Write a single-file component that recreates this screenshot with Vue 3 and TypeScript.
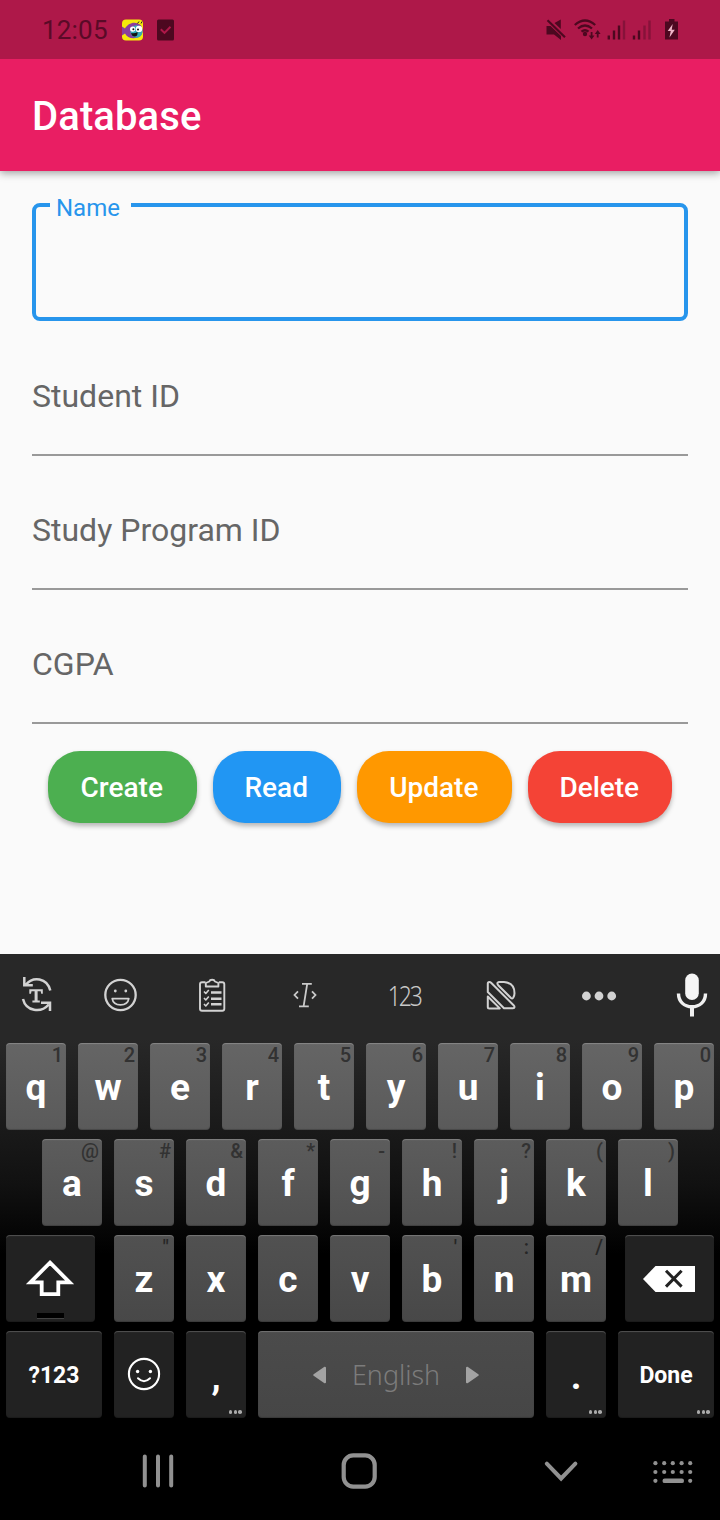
<script setup lang="ts">
interface Key {
  label: string
  hint?: string
}

const toKeys = (letters: string, hints: string[]): Key[] =>
  letters.split('').map((label, i) => ({ label, hint: hints[i] }))

const rowOne: Key[] = toKeys('qwertyuiop', '1234567890'.split(''))
const rowTwo: Key[] = toKeys('asdfghjkl', ['@', '#', '&', '*', '-', '!', '?', '(', ')'])
const rowThree: Key[] = toKeys('zxcvbnm', ['"', '', '', '', "'", ':', '/'])

const isNarrow = (hint?: string): boolean => !!hint && '-!:"\''.includes(hint)

const fields: string[] = ['Student ID', 'Study Program ID', 'CGPA']
const actions: { label: string; tone: string }[] = [
  { label: 'Create', tone: 'green' },
  { label: 'Read', tone: 'blue' },
  { label: 'Update', tone: 'orange' },
  { label: 'Delete', tone: 'red' },
]
const dotColumns: number[] = [655.4, 664.2, 672.8, 681.6, 690.2]
</script>

<template>
  <div class="screen">
    <div class="status">
      <span class="clock">12:05</span>
      <svg class="app-icon" width="22" height="22" viewBox="121 18.5 22 22">
        <rect x="122" y="19" width="21" height="21" rx="4" fill="#f5ea0a" />
        <path d="M122 26l3 2c3-6 11-8 16-3 3 4 2 10-3 12-6 2-11 0-13-4l-3 2z" fill="#8a3f9c" />
        <ellipse cx="136.5" cy="31" rx="6" ry="6.2" fill="#35a9b8" />
        <circle cx="132.7" cy="28.6" r="2.7" fill="#fff" />
        <circle cx="139" cy="28.4" r="3.2" fill="#fff" />
        <circle cx="133.4" cy="28.8" r="1" fill="#111" />
        <circle cx="138" cy="29" r="1" fill="#111" />
        <path d="M131 32.5q3.500 1 6.500-1q.5 4.500-3 4.500q-2.500 0-3.500-3.500z" fill="#111" />
        <path d="M137.500 23l1.500-2M141 23l1-2" stroke="#222" stroke-width="1" />
      </svg>
      <svg class="task-icon" width="18" height="22" viewBox="156 18.500 18 22">
        <rect x="157" y="19" width="17" height="21" rx="1.500" fill="#4d0820" />
        <path d="M160.800 28.700l3.700 3.700l6-6.200" fill="none" stroke="#ae1849" stroke-width="2" />
      </svg>
      <svg class="signals" width="140" height="26" viewBox="542 16.500 140 26">
        <g fill="#4d0820">
          <path d="M546.500 25.500h4l10.500 10v4l-7-5.500h-7.500zM554.500 22.500l6.300-3.500v9.500z" />
          <path d="M547.500 19.800l17.500 17" stroke="#4d0820" stroke-width="2.200" />
          <circle cx="585" cy="33.500" r="2.200" />
          <rect x="607.600" y="35" width="2.400" height="4" />
          <rect x="612.800" y="30" width="2.400" height="9" />
          <rect x="617.800" y="25" width="2.400" height="14" />
          <rect x="632.800" y="35" width="2.400" height="4" />
          <rect x="637.800" y="30" width="2.400" height="9" />
          <path d="M669 18.500h5.500v2.500h3.500v18h-13v-18h4z" />
          <path d="M590.700 31.500h1.800v3.500h2l-2.900 4l-2.900-4h2zM596.800 37h1.800v-3.500h2l-2.900-4l-2.900 4h2z" />
        </g>
        <g fill="#86123a">
          <rect x="622.800" y="20" width="2.400" height="19" />
          <rect x="643.300" y="25" width="2.400" height="14" />
          <rect x="648.300" y="20" width="2.400" height="19" />
        </g>
        <g fill="none" stroke="#4d0820" stroke-width="2.300">
          <path d="M574.800 24.500q10.200-9 20.400 0M578 28q7-6 14 0M581.500 31.200q3.500-3 7 0" />
        </g>
        <path d="M672.700 23.500l-5 7h3l-1.200 6.500l5.300-7.800h-3.100z" fill="#efb6c8" />
      </svg>
    </div>

    <header class="app-bar">Database</header>

    <main class="content">
      <div class="outlined">
        <label class="floating">Name</label>
      </div>
      <div class="fields">
        <div v-for="field in fields" :key="field" class="underlined">{{ field }}</div>
      </div>
      <div class="actions">
        <button v-for="a in actions" :key="a.label" :class="['action', a.tone]">{{ a.label }}</button>
      </div>
    </main>

    <section class="keyboard">
      <div class="tools">
        <svg width="40" height="48" viewBox="17 972 40 48">
          <g fill="none" stroke="#d2d2d2" stroke-width="2.500">
            <path d="M24.300 977v8.300h8.500M26 984.500C33 976 47 977.500 50.300 990.500" />
            <path d="M50 1011v-8.300h-9M23 999C26 1011.500 41 1013.500 48.700 1004.500" />
          </g>
          <path d="M29.300 989.200h13.500v4.500h-1.600l-.5-2.400h-3.100v9.200h2.200v1.900h-7.400v-1.900h2.200v-9.200h-3.100l-.5 2.400h-1.700z" fill="#d2d2d2" />
        </svg>
        <svg width="40" height="48" viewBox="101 972 40 48">
          <g fill="none" stroke="#d2d2d2">
            <circle cx="120.500" cy="995" r="15.200" stroke-width="2.300" />
            <path d="M112.200 998.600h16.600q-1 6.200-8.300 6.200t-8.300-6.200z" stroke-width="1.700" stroke-linejoin="round" />
          </g>
          <circle cx="115.300" cy="991" r="1.400" fill="#d2d2d2" />
          <circle cx="125.800" cy="991" r="1.400" fill="#d2d2d2" />
        </svg>
        <svg width="40" height="48" viewBox="192 972 40 48">
          <g fill="none" stroke="#d2d2d2" stroke-width="1.900" stroke-linejoin="round">
            <path d="M205.500 982.300h-3.500q-2 0-2 2v24.400q0 2 2 2h20.300q2 0 2-2v-24.400q0-2-2-2h-3.500" />
            <path d="M205.800 986.500v-3.500l3.500-1.500q.5-1.800 2.800-1.800t2.800 1.800l3.500 1.500v3.500z" />
            <path d="M204 991.500l1.800 2l3-3.500M204 998l1.800 2l3-3.500M204 1004l1.800 2l3-3.500" stroke-width="1.600" />
          </g>
          <path d="M211 992.500h10.500M211 998.800h10.500M211 1004.300h10.500" stroke="#d2d2d2" stroke-width="2.400" />
        </svg>
        <svg width="40" height="48" viewBox="285 972 40 48">
          <g fill="none" stroke="#cacaca" stroke-width="1.800">
            <path d="M302 983.800h9.800M299 1006.300h9.800M307.200 983.800l-3.600 22.500" />
            <path d="M298 991.300l-3.500 3.700l3.500 3.700M312 991.300l3.500 3.700l-3.500 3.700" />
          </g>
        </svg>
        <span class="numbers">123</span>
        <svg width="40" height="48" viewBox="481 972 40 48">
          <g fill="none" stroke="#d2d2d2" stroke-width="2" stroke-linejoin="round">
            <path d="M487.800 992v-8.500q0-1.500 1.500-1.500q1 0 1.800.8l22.500 22.500q1 1 .9 1.900q-.1 1-1.500 1h-9z" />
            <path d="M487.800 996.500l12 11.900h-10.500q-1.500 0-1.500-1.500z" />
            <path d="M499 982h5q10.500.8 10.500 11.200q0 2.500-1.300 4.600q-.9 1.300-2.200.2l-12.800-12.800q-2-2.600.8-3.200z" />
          </g>
        </svg>
        <svg width="40" height="48" viewBox="579 972 40 48" fill="#d2d2d2">
          <circle cx="586.400" cy="996" r="4.400" />
          <circle cx="599" cy="996" r="4.400" />
          <circle cx="611.700" cy="996" r="4.400" />
        </svg>
        <svg class="mic" width="40" height="48" viewBox="672 972 40 48">
          <rect x="685.200" y="973.500" width="13.600" height="26.500" rx="6.800" fill="#f5f5f5" />
          <path d="M678.500 993.500c0 8 5.500 13.300 13.500 13.300s13.500-5.300 13.500-13.300" fill="none" stroke="#f0f0f0" stroke-width="3.400" />
          <path d="M692 1006v10.500" stroke="#f0f0f0" stroke-width="4" />
        </svg>
      </div>

      <div class="rows">
        <div class="row one">
          <div v-for="k in rowOne" :key="k.label" class="key"><span class="hint">{{ k.hint }}</span>{{ k.label }}</div>
        </div>
        <div class="row two">
          <div v-for="k in rowTwo" :key="k.label" class="key"><span :class="['hint', { narrow: isNarrow(k.hint) }]">{{ k.hint }}</span>{{ k.label }}</div>
        </div>
        <div class="row three">
          <div class="key dark shift">
            <svg width="89" height="87" viewBox="6 1235 89 87">
              <path d="M50 1262.600l19.600 19.800h-11.300v11.800h-16.600v-11.800h-11.300z" fill="none" stroke="#fff" stroke-width="3.800" />
              <path d="M37 1313h27v5h-27z" fill="#000" />
              <path d="M37 1318.500h27" stroke="#444" stroke-width="1" />
            </svg>
          </div>
          <div class="letters">
            <div v-for="k in rowThree" :key="k.label" class="key"><span :class="['hint', { narrow: isNarrow(k.hint) }]">{{ k.hint }}</span>{{ k.label }}</div>
          </div>
          <div class="key dark">
            <svg width="89" height="87" viewBox="625 1235 89 87">
              <path d="M643 1279l12.500-13h39.500v26h-39.500z" fill="#fff" />
              <path d="M666 1270.800l15.600 15.800M681.600 1270.800l-15.600 15.800" stroke="#222" stroke-width="3" />
            </svg>
          </div>
        </div>
        <div class="row four">
          <div class="key dark word">?123</div>
          <div class="key dark">
            <svg width="60" height="87" viewBox="114 1331 60 87">
              <circle cx="144" cy="1374" r="15.100" fill="none" stroke="#fff" stroke-width="2.100" />
              <circle cx="137.600" cy="1371.500" r="1.700" fill="#fff" />
              <circle cx="150.400" cy="1371.500" r="1.700" fill="#fff" />
              <path d="M138 1378.300q6 5.800 12 0" fill="none" stroke="#fff" stroke-width="2" stroke-linecap="round" />
            </svg>
          </div>
          <div class="key dark mark">,<i class="more"><b></b><b></b><b></b></i></div>
          <div class="key space">
            <svg width="16" height="20" viewBox="0 0 16 20"><path d="M2.200 10l10.800-7.300v14.600z" fill="#a3a3a3" stroke="#a3a3a3" stroke-width="2" stroke-linejoin="round" /></svg>
            <span class="language">English</span>
            <svg width="16" height="20" viewBox="0 0 16 20"><path d="M13.800 10l-10.800-7.300v14.600z" fill="#a3a3a3" stroke="#a3a3a3" stroke-width="2" stroke-linejoin="round" /></svg>
          </div>
          <div class="key dark mark">.<i class="more"><b></b><b></b><b></b></i></div>
          <div class="key dark word">Done<i class="more"><b></b><b></b><b></b></i></div>
        </div>
      </div>

      <nav class="nav">
        <svg width="36" height="40" viewBox="140 1451 36 40">
          <path d="M144.800 1456.500v29M158 1456.500v29M171.200 1456.500v29" stroke="#919191" stroke-width="4" stroke-linecap="round" />
        </svg>
        <svg width="40" height="40" viewBox="339 1451 40 40">
          <rect x="343.700" y="1455.400" width="31" height="31.200" rx="9.500" fill="none" stroke="#919191" stroke-width="4.200" />
        </svg>
        <svg width="40" height="40" viewBox="541 1451 40 40">
          <path d="M546.800 1463.700l14.300 14.800l14.300-14.800" fill="none" stroke="#919191" stroke-width="4" stroke-linecap="round" />
        </svg>
        <svg width="44" height="40" viewBox="651 1451 44 40" fill="#919191">
          <g v-for="(x, i) in dotColumns" :key="x">
            <circle :cx="x" cy="1463.200" r="2.100" />
            <circle :cx="x" cy="1472" r="2.100" />
            <circle v-if="i === 0 || i === 4" :cx="x" cy="1480.800" r="2.100" />
          </g>
          <rect x="662.500" y="1478.600" width="21.500" height="4.500" rx="2.200" />
        </svg>
      </nav>
    </section>
  </div>
</template>

<style>
body {
  margin: 0;
  background: #fafafa;
}
</style>

<style scoped>
.screen {
  width: 720px;
  height: 1520px;
  display: flex;
  flex-direction: column;
  overflow: hidden;
  background: #fafafa;
  font-family: Roboto, "Liberation Sans", sans-serif;
}
.screen * {
  box-sizing: border-box;
}
svg {
  display: block;
  flex: none;
}
.status {
  position: relative;
  z-index: 1;
  height: 59px;
  flex: none;
  display: flex;
  align-items: center;
  background: #ae1849;
}
.clock {
  width: 79px;
  margin-left: 42px;
  font-size: 26px;
  line-height: 30px;
  color: #5a0a27;
  letter-spacing: 0.2px;
}
.task-icon {
  margin-left: 13px;
}
.signals {
  margin-left: auto;
  margin-right: 38px;
}
.app-bar {
  height: 112px;
  flex: none;
  padding-left: 32px;
  background: #e91e63;
  color: #fff;
  font-size: 40px;
  font-weight: 500;
  line-height: 116px;
  letter-spacing: 0.1px;
  box-shadow: 0 2px 8px rgba(0, 0, 0, 0.38);
}
.content {
  flex: 1;
  padding: 32px 32px 0;
}
.outlined {
  position: relative;
  height: 118px;
  border: 4px solid #2795ec;
  border-radius: 8px;
}
.floating {
  position: absolute;
  left: 14px;
  top: -14px;
  width: 80.5px;
  padding-left: 6px;
  background: #fafafa;
  color: #2795ec;
  font-size: 24px;
  line-height: 30px;
}
.fields {
  display: flex;
  flex-direction: column;
  gap: 16px;
  margin-top: 17px;
}
.underlined {
  height: 118px;
  border-bottom: 2px solid #999;
  color: #666;
  font-size: 32px;
  line-height: 116px;
}
.actions {
  display: grid;
  grid-template-columns: 148.5px 128.5px 154.5px 144.5px;
  gap: 16px;
  padding: 27px 16px 0;
}
.action {
  height: 72px;
  padding: 1px 1px 0 0;
  border: 0;
  border-radius: 32px;
  color: #fff;
  font: 500 28px/72px Roboto, "Liberation Sans", sans-serif;
  box-shadow: 0 3px 5px rgba(0, 0, 0, 0.28);
}
.green {
  background: #4caf50;
}
.blue {
  background: #2196f3;
}
.orange {
  background: #ff9800;
}
.red {
  background: #f44336;
}
.keyboard {
  height: 566px;
  flex: none;
  background: linear-gradient(#282828 0, #282828 84px, #111 230px, #000 300px);
}
.tools {
  height: 84px;
  display: grid;
  grid-template-columns: 73px 95px 88px 98px 98px 98px 98px 72px;
  align-items: center;
  justify-items: center;
}
.mic {
  justify-self: end;
  margin-right: 8px;
}
.numbers {
  color: #c8c8c8;
  font: 300 28px/34px "Noto Sans", "Open Sans", sans-serif;
  letter-spacing: -2.5px;
  margin: -2px -2px 0 0;
  transform: scaleX(0.82);
}
.rows {
  display: flex;
  flex-direction: column;
  gap: 9px;
  padding: 5px 6px 0;
}
.row {
  display: flex;
  gap: 12px;
  height: 87px;
}
.row.two {
  padding-left: 36px;
}
.row.three {
  gap: 19px;
}
.letters {
  display: flex;
  gap: 12px;
}
.key {
  position: relative;
  width: 60px;
  height: 87px;
  flex: none;
  border-radius: 4px;
  color: #fff;
  font-size: 37px;
  font-weight: 700;
  line-height: 90px;
  text-align: center;
  background: linear-gradient(#656565, #5a5a5a);
  box-shadow: inset 0 2px 1px -1px rgba(255, 255, 255, 0.22), inset 0 -1px 1px rgba(0, 0, 0, 0.2);
}
.two .key {
  background: linear-gradient(#5c5c5c, #505050);
}
.three .key {
  background: linear-gradient(#515151, #484848);
}
.row .key.dark {
  background: #222;
}
.three > .key {
  width: 89px;
}
.hint {
  position: absolute;
  top: 0;
  right: 3px;
  color: #323232;
  font-size: 20px;
  font-weight: 500;
  line-height: 24px;
}
.three .hint {
  color: #262626;
}
.hint.narrow {
  right: 5px;
}
.four .word {
  width: 96px;
  font-size: 23px;
}
.four .mark {
  line-height: 91px;
}
.more {
  position: absolute;
  right: 4px;
  bottom: 4px;
  display: flex;
  gap: 1.200px;
}
.more b {
  width: 3.600px;
  height: 3.600px;
  border-radius: 50%;
  background: #aaa;
}
.four .space {
  width: 276px;
  display: flex;
  align-items: center;
  justify-content: center;
  gap: 24px;
  background: linear-gradient(#4b4b4b, #464646);
}
.language {
  width: 88px;
  margin-top: -2px;
  color: #7c7c7c;
  font: 300 28px/34px "Noto Sans", "Open Sans", sans-serif;
  white-space: nowrap;
  transform: scaleX(0.96);
  transform-origin: left;
}
.nav {
  display: flex;
  align-items: center;
  height: 102px;
  padding: 4px 25px 0 140px;
}
.nav svg:nth-child(2) {
  margin-left: 163px;
}
.nav svg:nth-child(3) {
  margin-left: 162px;
}
.nav svg:nth-child(4) {
  margin-left: 70px;
}
</style>
